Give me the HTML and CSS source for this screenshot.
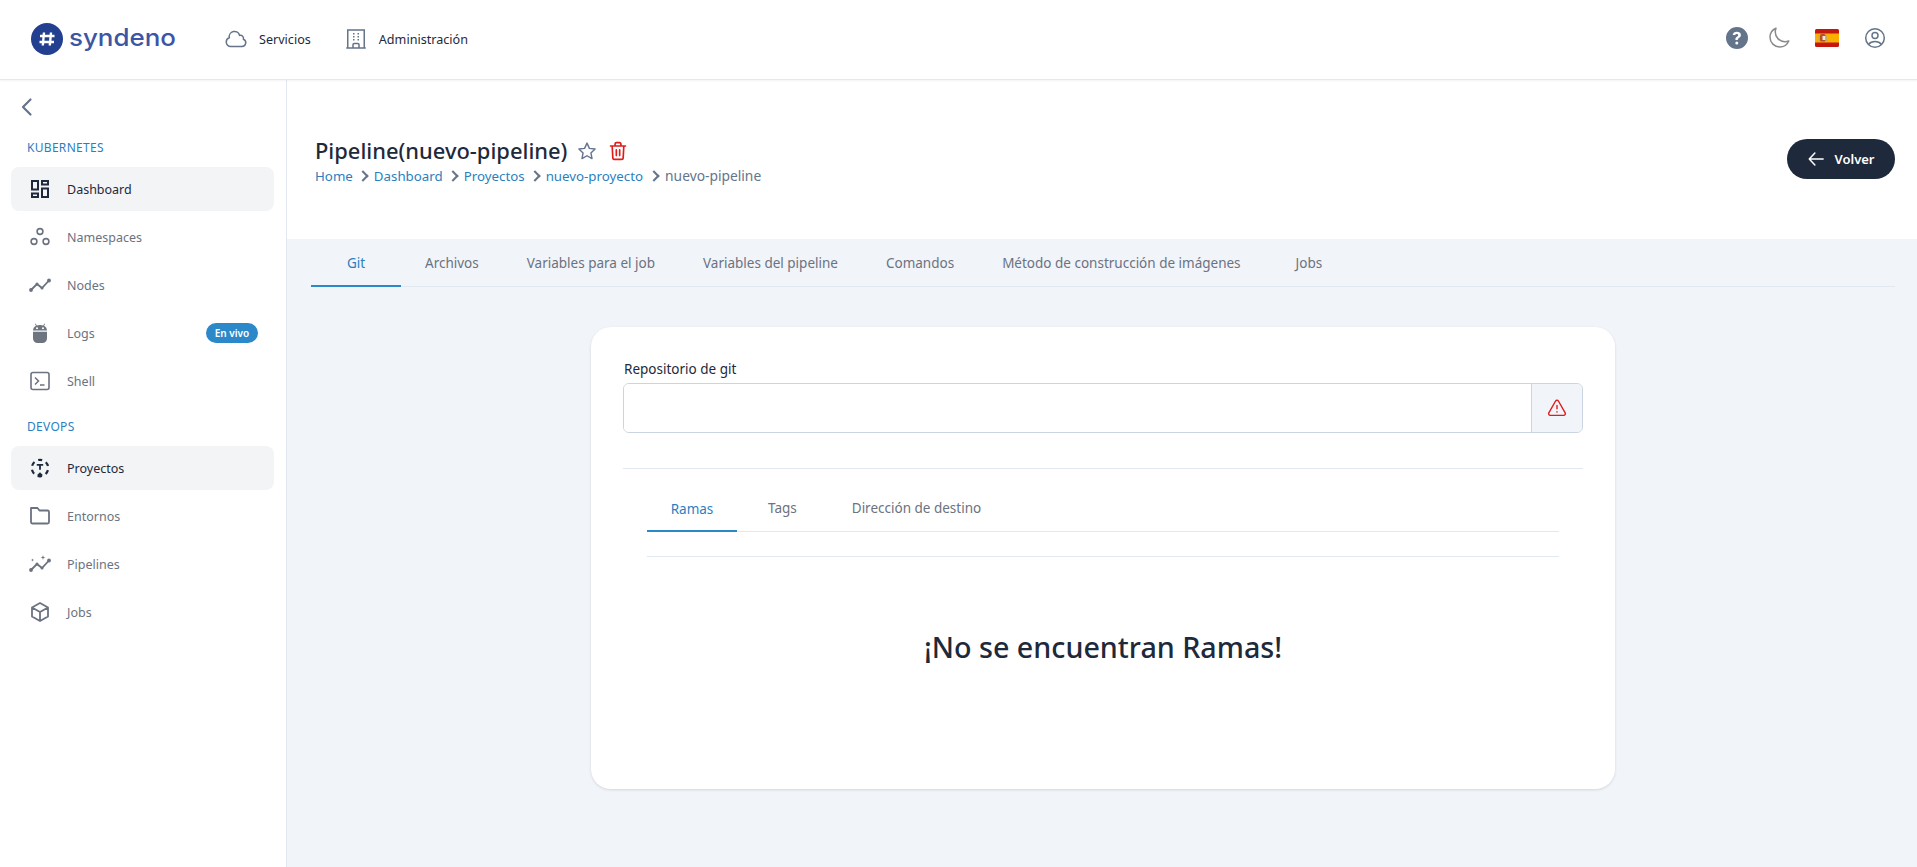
FILE: index.html
```html
<!DOCTYPE html>
<html lang="es">
<head>
  <meta charset="UTF-8" />
  <meta name="viewport" content="width=device-width, initial-scale=1.0"/>
  <title>Pipeline - Syndeno</title>
  <link rel="stylesheet" href="styles.css">
</head>
<body>
  <header class="topbar">
    <a class="logo">
      <svg class="logo-mark" viewBox="0 0 32 32"><circle cx="16" cy="16" r="16" fill="#22408f"/><path d="M13 9.500 11.800 22.500M20 9.500 18.800 22.500M9 13h14.500M8.500 19H23" stroke="#fff" stroke-width="2.400" fill="none"/></svg>
      <span class="logo-text">syndeno</span>
    </a>
    <nav class="topnav">
      <a class="topnav-item">
        <svg class="icon-nav" viewBox="0 0 24 24" fill="none" stroke="#64748b" stroke-width="1.500" stroke-linecap="round" stroke-linejoin="round"><path d="M2.250 15a4.500 4.500 0 0 0 4.500 4.500H18a3.750 3.750 0 0 0 1.332-7.257 3 3 0 0 0-3.758-3.848 5.250 5.250 0 0 0-10.233 2.330A4.502 4.502 0 0 0 2.250 15Z"/></svg>
        <span>Servicios</span>
      </a>
      <a class="topnav-item">
        <svg class="icon-nav" viewBox="0 0 24 24" fill="none" stroke="#64748b" stroke-width="1.500" stroke-linejoin="round"><path d="M2.250 21h19.500M3.750 3v18M20.250 3v18M3 3h18M9 6.750h1.500M9 9.750h1.500M9 12.750h1.500M13.500 6.750H15M13.500 9.750H15M13.500 12.750H15M9 21v-3.375c0-.621.504-1.125 1.125-1.125h3.750c.621 0 1.125.504 1.125 1.125V21"/></svg>
        <span>Administración</span>
      </a>
    </nav>
    <div class="topbar-right">
      <svg class="icon-help" viewBox="0 0 24 24"><path fill="#64748b" fill-rule="evenodd" d="M12 1a11 11 0 1 0 0 22 11 11 0 0 0 0-22Zm-.2 4.800c-2.300 0-3.900 1.200-4.100 3.300h2.500c.1-.8.700-1.200 1.500-1.200.9 0 1.500.5 1.500 1.200 0 .7-.4 1.100-1.200 1.600-1.100.7-1.700 1.400-1.600 2.800v.5h2.400v-.4c0-.8.300-1.100 1.200-1.700 1.200-.7 1.900-1.600 1.900-2.900 0-2.100-1.700-3.200-4.100-3.200Zm0 9.700a1.500 1.500 0 1 0 0 3 1.500 1.500 0 0 0 0-3Z"/></svg>
      <svg class="icon-moon" viewBox="0 0 24 24" fill="none" stroke="#8a8a8a" stroke-width="1.500" stroke-linejoin="round"><path d="M21.752 15.002A9.720 9.720 0 0 1 18 15.750 9.750 9.750 0 0 1 8.250 6c0-1.330.266-2.597.748-3.752A9.753 9.753 0 0 0 3 11.250 9.750 9.750 0 0 0 12.750 21a9.753 9.753 0 0 0 9.002-5.998Z"/></svg>
      <svg class="flag" viewBox="0 0 24 18"><rect width="24" height="18" rx="1.500" fill="#c4170f"/><rect y="4.500" width="24" height="9" fill="#fbb000"/><rect x="5" y="5" width="5.500" height="7.500" rx="1.500" fill="#b5502c"/><rect x="7.500" y="7" width="3" height="4" fill="#f3e9d8"/><path d="M4.200 6v6M11.200 6v6" stroke="#a8a295" stroke-width="1"/></svg>
      <svg class="icon-user" viewBox="0 0 24 24" fill="none" stroke="#64748b" stroke-width="1.500"><circle cx="12" cy="12" r="9.300"/><circle cx="12" cy="9.500" r="3"/><path d="M5.500 18.500c1.500-2 3.800-3 6.500-3s5 1 6.500 3"/></svg>
    </div>
  </header>

  <div class="layout">
    <aside class="sidebar">
      <div class="collapse">
        <svg class="icon-chevron" viewBox="0 0 24 24" fill="none" stroke="#64748b" stroke-width="2.200" stroke-linecap="round" stroke-linejoin="round"><path d="M15.500 4.500 8 12l7.500 7.500"/></svg>
      </div>
      <div class="side-title">KUBERNETES</div>
      <a class="side-item active">
        <svg class="side-icon" viewBox="0 0 20 20" fill="none" stroke="#1e293b" stroke-width="2"><rect x="2" y="2" width="6" height="8.500"/><rect x="12" y="2" width="6" height="3.500"/><rect x="2" y="14.500" width="6" height="3.500"/><rect x="12" y="9.500" width="6" height="8.500"/></svg>
        <span>Dashboard</span>
      </a>
      <a class="side-item">
        <svg class="side-icon" viewBox="0 0 20 20" fill="none" stroke="#6b7280" stroke-width="1.600"><circle cx="10" cy="4.500" r="2.900"/><circle cx="4" cy="14.500" r="2.900"/><circle cx="16" cy="14.500" r="2.900"/></svg>
        <span>Namespaces</span>
      </a>
      <a class="side-item">
        <svg class="side-icon-wide" viewBox="0 0 22 20" fill="none" stroke="#6b7280" stroke-width="1.800"><path d="M2 15 8 9l5 4 7-7.500"/><g fill="#6b7280" stroke="none"><circle cx="2" cy="15" r="1.900"/><circle cx="8" cy="9" r="1.500"/><circle cx="13" cy="13" r="1.500"/><circle cx="20" cy="5.500" r="1.900"/></g></svg>
        <span>Nodes</span>
      </a>
      <a class="side-item">
        <svg class="side-icon" viewBox="0 0 20 20"><path fill="#6f7580" fill-rule="evenodd" d="M3 7.500c.2-2.400 1.400-3.900 3-4.700L4.800.9l.6-.4 1.400 2A8 8 0 0 1 10 2a8 8 0 0 1 3.200.5l1.400-2 .6.4L14 2.800c1.600.8 2.800 2.300 3 4.700H3ZM7 4.200a1 1 0 1 0 0 2 1 1 0 0 0 0-2Zm6 0a1 1 0 1 0 0 2 1 1 0 0 0 0-2Z"/><path fill="#6f7580" d="M3 8.800h14v6.700a4.500 4.500 0 0 1-4.500 4.500h-5A4.500 4.500 0 0 1 3 15.500V8.800Z"/></svg>
        <span>Logs</span>
        <em class="badge">En vivo</em>
      </a>
      <a class="side-item">
        <svg class="side-icon" viewBox="0 0 20 20" fill="none" stroke="#6b7280" stroke-width="1.600"><rect x="1" y="1.500" width="18" height="17" rx="2"/><path d="M5 6.500 8.500 10 5 13.500M10 14h4.500" stroke-width="1.500"/></svg>
        <span>Shell</span>
      </a>
      <div class="side-title second">DEVOPS</div>
      <a class="side-item active">
        <svg class="side-icon" viewBox="0 0 20 20" fill="none" stroke="#1e293b" stroke-width="2.200"><circle cx="10" cy="10" r="8.200" stroke-dasharray="4.400 4.190" stroke-dashoffset="2.200" transform="rotate(-90 10 10)"/><path d="M6.800 6.800h6.400M10 6.800v5" stroke-width="1.800"/><path d="M7.200 17 10 14.300l2.800 2.700L10 19.700Z" fill="#1e293b" stroke="none"/></svg>
        <span>Proyectos</span>
      </a>
      <a class="side-item">
        <svg class="side-icon" viewBox="0 0 20 20" fill="none" stroke="#6b7280" stroke-width="1.800" stroke-linejoin="round"><path d="M1 4V2h6.500L9.500 4.500H17.500A1.500 1.500 0 0 1 19 6v10a1.500 1.500 0 0 1-1.500 1.500h-15A1.500 1.500 0 0 1 1 16V4Z"/></svg>
        <span>Entornos</span>
      </a>
      <a class="side-item">
        <svg class="side-icon-wide" viewBox="0 0 22 20" fill="none" stroke="#6b7280" stroke-width="1.800"><path d="M2 16l6-6 5 4 7-7.500"/><g fill="#6b7280" stroke="none"><circle cx="2" cy="16" r="1.900"/><circle cx="8" cy="10" r="1.500"/><circle cx="13" cy="14" r="1.500"/><circle cx="20" cy="6.500" r="1.900"/><path d="M14 1l.6 1.900 1.900.6-1.900.6-.6 1.900-.6-1.900-1.900-.6 1.900-.6ZM3.500 4.500l.4 1.100 1.100.4-1.100.4-.4 1.100-.4-1.100L2 6l1.100-.4Z"/></g></svg>
        <span>Pipelines</span>
      </a>
      <a class="side-item">
        <svg class="side-icon" viewBox="0 0 20 20" fill="none" stroke="#6b7280" stroke-width="1.800" stroke-linejoin="round"><path d="M10 1 18 5.500v9L10 19l-8-4.500v-9L10 1ZM2 5.500 10 10l8-4.500M10 10v9"/></svg>
        <span>Jobs</span>
      </a>
    </aside>

    <main class="content">
      <section class="page-head">
        <div>
          <div class="title-row">
            <h1>Pipeline(nuevo-pipeline)</h1>
            <svg class="icon-star" viewBox="0 0 24 24" fill="none" stroke="#64748b" stroke-width="1.700" stroke-linejoin="round"><path d="M12 2.500l2.900 6.300 6.800.8-5 4.700 1.300 6.800-6-3.400-6 3.400 1.300-6.800-5-4.700 6.800-.8L12 2.500Z"/></svg>
            <svg class="icon-trash" viewBox="0 0 24 24" fill="none" stroke="#e01b1b" stroke-width="2" stroke-linecap="round" stroke-linejoin="round"><path d="M3 6h18M8.500 6V3.500A1.500 1.500 0 0 1 10 2h4a1.500 1.500 0 0 1 1.500 1.500V6M5 6l.8 14a2 2 0 0 0 2 2h8.400a2 2 0 0 0 2-2L19 6M10 10.500v7M14 10.500v7"/></svg>
          </div>
          <ol class="crumbs">
            <li><a>Home</a></li>
            <li><a>Dashboard</a></li>
            <li><a>Proyectos</a></li>
            <li><a>nuevo-proyecto</a></li>
            <li class="current">nuevo-pipeline</li>
          </ol>
        </div>
        <button class="btn-back">
          <svg viewBox="0 0 24 24" fill="none" stroke="#fff" stroke-width="2" stroke-linecap="round" stroke-linejoin="round"><path d="M10.500 4 3 12l7.500 8M3 12h18.500"/></svg>
          Volver
        </button>
      </section>

      <section class="page-body">
        <div class="tabs main-tabs">
          <a class="tab active">Git</a>
          <a class="tab">Archivos</a>
          <a class="tab">Variables para el job</a>
          <a class="tab">Variables del pipeline</a>
          <a class="tab">Comandos</a>
          <a class="tab">Método de construcción de imágenes</a>
          <a class="tab">Jobs</a>
        </div>

        <div class="card">
          <label class="field-label" for="repo">Repositorio de git</label>
          <div class="input-group">
            <input type="text" id="repo">
            <span class="input-addon">
              <svg viewBox="0 0 24 24" fill="none" stroke="#e01b1b" stroke-width="1.700" stroke-linecap="round" stroke-linejoin="round"><path d="M12 9v4M12 16.500v.2M10.300 3.600 2.200 17.800A2 2 0 0 0 3.900 20.800h16.200a2 2 0 0 0 1.700-3L13.700 3.600a2 2 0 0 0-3.400 0Z"/></svg>
            </span>
          </div>
          <hr class="divider">
          <div class="inner">
            <div class="tabs inner-tabs">
              <a class="tab active">Ramas</a>
              <a class="tab">Tags</a>
              <a class="tab">Dirección de destino</a>
            </div>
            <div class="inner-rule"></div>
            <h2 class="empty">¡No se encuentran Ramas!</h2>
          </div>
        </div>
      </section>
    </main>
  </div>
</body>
</html>
```

FILE: styles.css
```css
* {
  box-sizing: border-box;
}
html, body {
  height: 100%;
}
body {
  margin: 0;
  font-family: "Noto Sans", "Open Sans", sans-serif;
  font-size: 13px;
  color: #1e293b;
  background: #fff;
  display: flex;
  flex-direction: column;
  height: 867px;
  overflow: hidden;
}

/* top bar */
.topbar {
  height: 80px;
  flex: none;
  display: flex;
  align-items: center;
  padding: 0 0 1px 31px;
  background: #fff;
  border-bottom: 1px solid #e5e7eb;
  box-shadow: 0 1px 2px rgba(0,0,0,0.05);
  position: relative;
  z-index: 2;
}
.logo {
  display: flex;
  align-items: center;
  gap: 6px;
  width: 193px;
}
.logo-mark {
  width: 32px;
  height: 32px;
}
.logo-text {
  font-family: "Inter", sans-serif;
  font-size: 24px;
  font-weight: 500;
  line-height: 28px;
  color: #3d55a5;
  transform: scaleX(1.08);
  transform-origin: left center;
  padding-bottom: 3px;
}
.topnav {
  display: flex;
  gap: 33px;
  font-size: 12.6px;
}
.topnav-item {
  display: flex;
  align-items: center;
  gap: 11px;
}
.icon-nav {
  width: 24px;
  height: 24px;
}
.topbar-right {
  margin-left: auto;
  display: flex;
  align-items: center;
  padding: 0 30px 2px 0;
}
.icon-help {
  width: 24px;
  height: 24px;
}
.icon-moon {
  width: 24px;
  height: 24px;
  margin-left: 18px;
}
.flag {
  width: 24px;
  height: 18px;
  margin-left: 24px;
}
.icon-user {
  width: 24px;
  height: 24px;
  margin-left: 24px;
}

/* sidebar */
.layout {
  flex: 1;
  display: flex;
  min-height: 0;
}
.sidebar {
  width: 287px;
  flex: none;
  padding: 0 12px 0 11px;
  background: #fff;
  border-right: 1px solid #e2e8f0;
}
.collapse {
  height: 56px;
  display: flex;
  align-items: center;
  padding: 0 0 2px 4px;
}
.icon-chevron {
  width: 24px;
  height: 24px;
}
.side-title {
  font-size: 12px;
  line-height: 16px;
  color: #2b7fbf;
  letter-spacing: 0.3px;
  padding: 4px 0 0 16px;
  height: 31px;
}
.side-title.second {
  height: 39px;
  padding-top: 12px;
  margin-top: 2px;
}
.side-item {
  height: 44px;
  margin-bottom: 4px;
  border-radius: 8px;
  display: flex;
  align-items: center;
  padding: 0 16px 0 17px;
  color: #6b7280;
  font-size: 12.5px;
}
.side-item.active {
  background: #f3f4f6;
  color: #1e293b;
}
.side-icon {
  width: 20px;
  height: 20px;
  margin: 0 17px 0 2px;
  flex: none;
}
.side-icon-wide {
  width: 22px;
  height: 20px;
  margin: 0 16px 0 1px;
  flex: none;
}
.badge {
  margin-left: auto;
  font-style: normal;
  font-size: 10px;
  font-weight: 600;
  line-height: 20px;
  height: 20px;
  width: 52px;
  text-align: center;
  border-radius: 10px;
  background: #2b88c9;
  color: #fff;
}

/* page */
.content {
  flex: 1;
  min-width: 0;
  display: flex;
  flex-direction: column;
}
.page-head {
  height: 159px;
  flex: none;
  display: flex;
  justify-content: space-between;
  align-items: flex-start;
  padding: 56px 22px 0 28px;
}
.title-row {
  display: flex;
  align-items: center;
  height: 30px;
}
h1 {
  margin: 0;
  font-size: 21.900px;
  font-weight: 500;
  line-height: 30px;
  color: #1e293b;
}
.icon-star {
  width: 20px;
  height: 20px;
  margin-left: 10px;
}
.icon-trash {
  width: 20px;
  height: 20px;
  margin-left: 11px;
}
.crumbs {
  list-style: none;
  margin: 0;
  padding: 0;
  display: flex;
  line-height: 20px;
  font-size: 13.3px;
}
.crumbs li {
  display: flex;
  align-items: center;
  color: #64748b;
}
.crumbs a {
  color: #2b7fbf;
}
.crumbs .current {
  font-size: 13.8px;
  margin-left: 1px;
}
.crumbs li + li::before {
  content: "";
  width: 6px;
  height: 6px;
  margin: 0 7px 0 6px;
  border-top: 2px solid #64748b;
  border-right: 2px solid #64748b;
  transform: rotate(45deg);
}
.btn-back {
  width: 108px;
  height: 40px;
  margin-top: 3px;
  border: 0;
  border-radius: 20px;
  background: #1e293b;
  color: #fff;
  font-family: inherit;
  font-size: 13px;
  font-weight: 600;
  display: flex;
  align-items: center;
  justify-content: center;
  gap: 9px;
  padding: 0;
}
.btn-back svg {
  width: 18px;
  height: 18px;
}
.page-body {
  flex: 1;
  background: #f1f4f9;
  padding: 0 22px 0 24px;
}
.tabs {
  display: flex;
  border-bottom: 1px solid #e2e8f0;
  font-size: 13.5px;
}
.main-tabs {
  height: 48px;
}
.main-tabs .tab:last-child {
  margin-left: 7px;
}
.tab {
  height: 100%;
  padding: 0 24px;
  display: flex;
  align-items: center;
  color: #6b7280;
}
.tab.active {
  color: #2b7fbf;
  box-shadow: inset 0 -2px 0 #2b88c9;
  margin-bottom: -1px;
  height: calc(100% + 1px);
}
.main-tabs .tab.active {
  width: 90px;
  justify-content: center;
}

/* card */
.card {
  width: 1024px;
  height: 462px;
  margin: 40px auto 0;
  background: #fff;
  border-radius: 20px;
  box-shadow: 0 1px 3px rgba(0,0,0,0.12);
  padding: 32px;
}
.field-label {
  display: block;
  line-height: 20px;
  height: 24px;
  padding-left: 1px;
  font-size: 13.5px;
  color: #1e293b;
}
.input-group {
  display: flex;
  height: 50px;
  border: 1px solid #cbd5e1;
  border-radius: 6px;
  overflow: hidden;
}
.input-group input {
  flex: 1;
  border: 0;
  outline: 0;
  padding: 0 12px;
  font: inherit;
  background: #fff;
}
.input-addon {
  width: 51px;
  background: #f1f4f9;
  border-left: 1px solid #cbd5e1;
  display: flex;
  align-items: center;
  justify-content: center;
}
.input-addon svg {
  width: 20px;
  height: 20px;
}
.divider {
  margin: 35px 0 0;
  border: 0;
  border-top: 1px solid #e2e8f0;
}
.inner {
  padding: 14px 24px 0;
}
.inner-tabs {
  height: 49px;
}
.inner-tabs .tab {
  padding-top: 2px;
}
.inner-tabs .tab:first-child {
  width: 90px;
  justify-content: center;
}
.inner-tabs .tab:nth-child(2) {
  padding: 2px 31px 0;
}
.inner-rule {
  height: 0;
  margin-top: 24px;
  border-top: 1px solid #e2e8f0;
}
.empty {
  margin: 70px 0 0;
  text-align: center;
  font-size: 28.700px;
  font-weight: 500;
  line-height: 40px;
  color: #1e293b;
}
```
